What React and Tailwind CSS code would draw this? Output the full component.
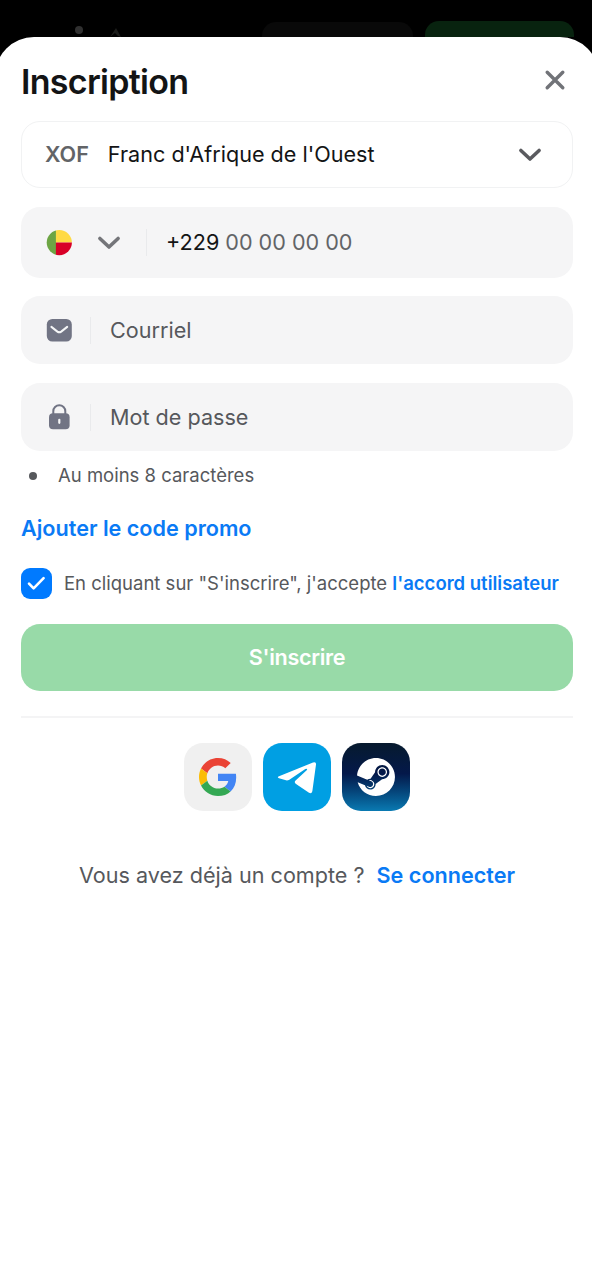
import { useState } from "react";
import { SiSteam } from "react-icons/si";

const Chevron = ({ className }) => (
  <svg width="24" height="16" viewBox="0 0 24 16" fill="none" className={className}>
    <path d="M2.900 3.500 12 12l9.100-8.500" stroke="currentColor" strokeWidth="3.600" strokeLinecap="round" strokeLinejoin="round" />
  </svg>
);

const CloseIcon = () => (
  <svg width="22" height="22" viewBox="0 0 22 22" fill="none">
    <path d="m3.200 3.200 15.600 15.600M18.800 3.200 3.200 18.800" stroke="currentColor" strokeWidth="3.400" strokeLinecap="round" />
  </svg>
);

const BeninFlag = () => (
  <svg width="26" height="26" viewBox="0 0 26 26">
    <clipPath id="flag">
      <circle cx="13.300" cy="12.600" r="12.600" />
    </clipPath>
    <g clipPath="url(#flag)">
      <path fill="#6da544" d="M0 0h10v26H0z" />
      <path fill="#ffda44" d="M9.900 0H26v12.600H9.900z" />
      <path fill="#d80027" d="M9.900 12.600H26V26H9.900z" />
    </g>
  </svg>
);

const MailIcon = () => (
  <svg width="26" height="24" viewBox="0 0 26 24" fill="none">
    <rect x=".8" y="1" width="25" height="22.600" rx="5.500" fill="#717484" />
    <path d="m5.400 8.900 6 4.700c1.100.8 2.700.8 3.800 0l6-4.700" stroke="#f5f6f7" strokeWidth="2" strokeLinecap="round" />
  </svg>
);

const LockIcon = () => (
  <svg width="26" height="26" viewBox="0 0 26 26" fill="none">
    <path d="M7.300 11V7.200a6 6 0 0 1 12 0V11" stroke="#717484" strokeWidth="2" />
    <rect x="3" y="9.200" width="20.600" height="16" rx="4" fill="#717484" />
    <path d="M13.300 15.800v3" stroke="#f5f6f7" strokeWidth="2.200" strokeLinecap="round" />
  </svg>
);

const GoogleLogo = () => (
  <svg width="38" height="38" viewBox="0 0 48 48">
    <path fill="#EA4335" d="M24 9.500c3.540 0 6.710 1.220 9.210 3.600l6.850-6.850C35.900 2.380 30.470 0 24 0 14.620 0 6.510 5.380 2.560 13.220l7.980 6.190C12.430 13.720 17.740 9.500 24 9.500z" />
    <path fill="#4285F4" d="M46.980 24.550c0-1.570-.15-3.090-.38-4.550H24v9.020h12.940c-.58 2.960-2.260 5.480-4.780 7.180l7.730 6c4.510-4.180 7.090-10.360 7.090-17.650z" />
    <path fill="#FBBC05" d="M10.530 28.590c-.48-1.450-.76-2.990-.76-4.590s.27-3.140.76-4.590l-7.980-6.190C.92 16.460 0 20.120 0 24c0 3.880.92 7.540 2.560 10.780l7.970-6.190z" />
    <path fill="#34A853" d="M24 48c6.480 0 11.930-2.130 15.890-5.810l-7.730-6c-2.150 1.450-4.920 2.300-8.160 2.300-6.260 0-11.570-4.220-13.470-9.910l-7.980 6.190C6.510 42.620 14.620 48 24 48z" />
  </svg>
);

const TelegramLogo = () => (
  <svg width="68" height="68" viewBox="0 0 204 204">
    <path
      fill="#fff"
      d="M48 100 150 58.500q10-3 9 6l-11 80q-2 9-10 5L98 122q-5-4-1-9l34-31q2-2 1-4-2-2-5 0L79 110q-5 3-10 2l-21-6q-7-3 0-6z"
    />
  </svg>
);

const socials = [
  { name: "Google", className: "bg-[#f0f0f0]", logo: <GoogleLogo /> },
  { name: "Telegram", className: "bg-[#009fe3]", logo: <TelegramLogo /> },
  {
    name: "Steam",
    className: "bg-gradient-to-b from-[#071a2e] via-[#04184a] via-45% to-[#0a7ab2]",
    logo: <SiSteam size={38} className="text-white" />,
  },
];

function Field({ icon, type, placeholder }) {
  return (
    <label className="flex h-[68px] items-center rounded-[19px] bg-[#f5f5f6] pl-[25px]">
      {icon}
      <span className="ml-[18px] h-[27px] w-px bg-[#e9eaec]"></span>
      <input
        type={type}
        placeholder={placeholder}
        className="ml-[19px] min-w-0 flex-1 bg-transparent text-[21.6px] outline-none placeholder:text-[#56585c]"
      />
    </label>
  );
}

export default function App() {
  const [accepted, setAccepted] = useState(true);

  return (
    <div className="flex h-[1280px] w-full flex-col overflow-hidden bg-black font-[Inter,sans-serif] text-[#131415]">
      {/* Dimmed page header behind the sheet */}
      <div className="flex h-[37px] shrink-0 items-end overflow-hidden">
        <span className="mb-[3px] ml-[75px] size-2 rounded-full bg-[#303030]"></span>
        <svg width="14" height="9" viewBox="0 0 14 9" className="ml-[26px]">
          <path d="M1 9 7 0l5 9-3-1-3-3z" fill="#1b1c1a" />
        </svg>
        <div className="ml-[139px] h-[15px] w-[151px] rounded-t-[14px] bg-[#090909]"></div>
        <div className="ml-[12px] h-4 w-[149px] rounded-t-[14px] bg-[#08230f]"></div>
      </div>

      <div className="-mr-[7px] -ml-[5px] flex-1 rounded-t-[39px] bg-white pr-[26px] pl-[26px]">
        <div className="flex h-[84px] items-center justify-between pt-[4px] pr-[7px]">
          <h1 className="text-[34px] font-semibold tracking-[-0.7px]">Inscription</h1>
          <button className="mb-[2px] text-[#717378]" aria-label="Fermer">
            <CloseIcon />
          </button>
        </div>

        <button className="flex h-[67px] w-[552px] items-center rounded-[19px] border border-[#f1f2f3] pr-[30px] pl-[23px] text-[21.6px]">
          <span className="font-semibold text-[#626467]">XOF</span>
          <span className="ml-[19px]">Franc d'Afrique de l'Ouest</span>
          <Chevron className="ml-auto text-[#5a5b5f]" />
        </button>

        <div className="mt-[19px] flex h-[71px] w-[552px] items-center rounded-[19px] bg-[#f5f5f6] pl-[25px] text-[21.6px]">
          <BeninFlag />
          <Chevron className="ml-[25px] text-[#747579]" />
          <span className="ml-[25px] h-[27px] w-px bg-[#e9eaec]"></span>
          <span className="ml-[19px]">+229</span>
          <span className="ml-[6px] text-[#626467]">00 00 00 00</span>
        </div>

        <div className="mt-[18px] flex w-[552px] flex-col gap-[19px]">
          <Field type="email" placeholder="Courriel" icon={<MailIcon />} />
          <Field type="password" placeholder="Mot de passe" icon={<LockIcon />} />
        </div>

        <div className="mt-[11px] flex h-7 items-center text-[18.500px] text-[#56585c]">
          <span className="ml-[8px] size-2 rounded-full bg-[#56585c]"></span>
          <span className="ml-[21px]">Au moins 8 caractères</span>
        </div>

        <button className="mt-[22px] block h-8 text-[21.6px] leading-8 font-semibold text-[#0a7af5]">
          Ajouter le code promo
        </button>

        <div className="mt-[24px] flex h-[31px] items-center">
          <button
            onClick={() => setAccepted(!accepted)}
            className="flex size-[31px] items-center justify-center rounded-[9px] bg-[#007aff]"
            aria-label="Accepter"
          >
            {accepted && (
              <svg width="19" height="15" viewBox="0 0 19 15" fill="none">
                <path d="m2 7.600 4.600 4.800L16.600 2.200" stroke="#fff" strokeWidth="2.600" strokeLinecap="round" strokeLinejoin="round" />
              </svg>
            )}
          </button>
          <p className="ml-3 text-[18.500px] whitespace-nowrap text-[#56585c]">
            En cliquant sur "S'inscrire", j'accepte{" "}
            <a className="font-semibold text-[#0a7af5]">l'accord utilisateur</a>
          </p>
        </div>

        <button className="mt-[25px] h-[67px] w-[552px] rounded-[19px] bg-[#98daa8] text-[21.6px] font-semibold tracking-[-0.3px] text-white">
          S'inscrire
        </button>

        <div className="mt-[25px] h-[2px] w-[552px] bg-[#f4f4f5]"></div>

        <div className="mt-[24.500px] flex w-[552px] justify-center gap-[11px]">
          {socials.map((social) => (
            <button
              key={social.name}
              aria-label={social.name}
              className={`flex size-[68px] items-center justify-center rounded-[19px] ${social.className}`}
            >
              {social.logo}
            </button>
          ))}
        </div>

        <div className="mt-[48.500px] flex h-8 w-[552px] items-center justify-center gap-3 text-[21.6px] text-[#56585c]">
          <span>Vous avez déjà un compte ?</span>
          <a className="font-semibold text-[#0a7af5]">Se connecter</a>
        </div>
      </div>
    </div>
  );
}
